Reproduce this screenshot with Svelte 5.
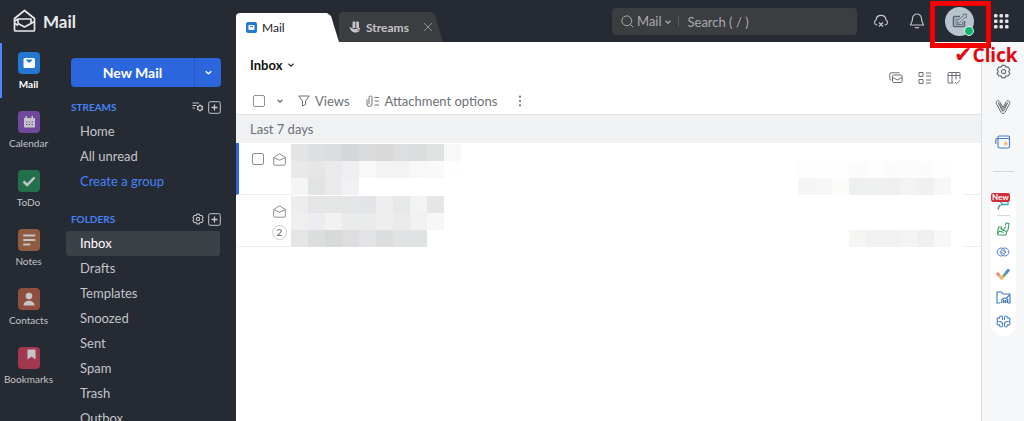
<script lang="ts">
  const apps = [
    { id: "mail", name: "Mail", color: "#2376d2" },
    { id: "calendar", name: "Calendar", color: "#70499d" },
    { id: "todo", name: "ToDo", color: "#22714c" },
    { id: "notes", name: "Notes", color: "#8f5c42" },
    { id: "contacts", name: "Contacts", color: "#8e4f3e" },
    { id: "bookmarks", name: "Bookmarks", color: "#a1384e" },
  ];
  const folders = ["Inbox", "Drafts", "Templates", "Snoozed", "Sent", "Spam", "Trash", "Outbox"];

  // redacted text, one colour per tile
  const messages = [
    {
      unread: true,
      count: 0,
      left: [
        "#e4e4e4 #dce0e3 #dcdddf #d5d6d8 #dadbdc #d9d9d9 #dcdee0 #dbddde #e0e2e1 #f7f9f8",
        "#e9e9e9 #e6e6e6 #eaeaea #eeeff2 #f8f8f8 #f3f3f3 #f2f4f3 #f8f8f8 #f7faf9 #fefefe",
        "#f3f6f5 #e2e3e5 #eaeaea #f0f1f4 #fff #fff #fff #fff #fff #fff",
      ],
      right: [
        "#fff #fff #fff #fff #fff #fff #fff #fff #fff",
        "#fdfdfd #fdfdfd #fefefe #fbfbfb #fdfdfd #fbfbfb #fcfcfc #fbfbfb #fdfdfd",
        "#f5f5f5 #f7f7f7 #fbfbf9 #edf0ef #eef1f0 #efefef #f3f3f3 #f0f0f0 #f5f8f7",
      ],
    },
    {
      unread: false,
      count: 2,
      left: [
        "#ededed #e4e5e7 #e4e6e5 #e4e5e7 #e3e4e7 #eeeeee #e7e8ea #f2f4f3 #e6e6e6 #fff",
        "#efefed #ebedf0 #f2f2f2 #eaebeb #e9eaec #eeeeee #e9ebea #f1f1f1 #f7f7f7 #fff",
        "#e4e6e5 #dcdedd #d7dadb #dedede #e2e3e6 #dcdedd #e0e2e4 #e0e3e4 #fff #fff",
      ],
      right: [
        "#fff #fff #fff #fff #fff #fff #fff #fff #fff",
        "#fff #fff #fff #fff #fff #fff #fff #fff #fff",
        "#fff #fff #fff #f5f5f3 #f0f2f1 #f1f1f1 #f3f3f1 #efefef #f7f7f7",
      ],
    },
  ];

  let activeApp = $state("mail");
  let activeFolder = $state("Inbox");
</script>

{#snippet chevron(size: number)}
  <svg width={size} height={size} viewBox="0 0 8 8" class="line"><path d="M1.5 2.8 4 5.2 6.5 2.8" stroke-width="1.2" /></svg>
{/snippet}

{#snippet gear()}
  <path d="M5.500 3.300 6.300 1.500h3.400l.8 1.800 2.400-.1L14.800 6l-1.300 2 1.300 2-1.900 2.800-2.400-.1-.8 1.800H6.300l-.8-1.800-2.400.1L1.200 10l1.300-2-1.300-2 1.900-2.800z" />
  <circle cx="8" cy="8" r="2.200" />
{/snippet}

{#snippet plus()}
  <svg width="13" height="13" viewBox="0 0 13 13" class="line"><rect x=".7" y=".7" width="11.600" height="11.600" rx="1.500" /><path d="M6.500 3.500v6M3.500 6.500h6" stroke-width="1.300" /></svg>
{/snippet}

{#snippet tiles(rows: string[])}
  <div class="tiles">
    {#each rows as row}
      <div class="tile-row">
        {#each row.split(" ") as color}
          <i style="background: {color}"></i>
        {/each}
      </div>
    {/each}
  </div>
{/snippet}

<div class="app">
  <header>
    <a class="brand" href="#mail">
      <svg width="24" height="24" viewBox="0 0 24 24" class="line" stroke-width="1.700">
        <path d="M1.500 9.500 11.500 1.500l10 8V21a1 1 0 0 1-1 1h-18a1 1 0 0 1-1-1z" />
        <path d="M1.500 14 5 16.500M5 14.500V10h13v4.500L11.500 18 5 14.500M5 10 1.500 12M18 14.500l3.500-2" />
      </svg>
      <span>Mail</span>
    </a>
    <nav class="tabs">
      <button class="tab current">
        <svg width="11" height="11" viewBox="0 0 11 11"><rect width="11" height="11" rx="2" fill="#2279d6" /><rect x="2.500" y="3" width="6" height="5" rx=".8" fill="#fff" /><path d="M4 4h3v1H4z" fill="#2279d6" /></svg>
        Mail
      </button>
      <div class="tab other">
        <svg width="12" height="12" viewBox="0 0 12 12" fill="#c4c5c7"><circle cx="5" cy="1.800" r="1.500" /><circle cx="8.500" cy="1.800" r="1.500" /><path d="M3.500 2.500h2.800V7H3.500zM7.200 2.500H10V7H7.200zM.5 6l5 2.300L11 6.800v1.400L7 9.500l4-.3C10 11 8 11.500 6 11.500S1.500 10 .5 6z" /></svg>
        <span>Streams</span>
        <button class="close" aria-label="Close tab"><svg width="10" height="10" viewBox="0 0 10 10" class="line"><path d="m1 1 8 8M9 1 1 9" /></svg></button>
      </div>
    </nav>
    <div class="search">
      <svg width="13" height="13" viewBox="0 0 13 13" class="line"><circle cx="5.800" cy="5.800" r="4.900" /><path d="m9.300 9.300 3 3" /></svg>
      <button class="scope">Mail {@render chevron(8)}</button>
      <input type="text" placeholder="Search ( / )" aria-label="Search" />
    </div>
    <div class="tools">
      <button aria-label="Offline">
        <svg width="16" height="16" viewBox="0 0 16 16" class="line" stroke-width="1.200"><path d="M4.500 12H4a2.700 2.700 0 0 1-.8-5.200C3.200 1 12.800 1 12.800 6.800A2.700 2.700 0 0 1 12 12h-.5M6 9.500l4 4M10 9.500l-4 4" /></svg>
      </button>
      <button aria-label="Notifications">
        <svg width="16" height="16" viewBox="0 0 16 16" class="line" stroke-width="1.200"><path d="M8 1a4.500 4.500 0 0 0-4.500 4.500C3.500 10 1.500 10.500 1.500 12h13c0-1.500-2-2-2-6.500A4.500 4.500 0 0 0 8 1zM6 14.200c.8 1 3.200 1 4 0" /></svg>
      </button>
      <div class="profile">
        <button class="avatar" aria-label="Profile">
          <svg width="16" height="16" viewBox="0 0 16 16" class="line"><path d="M8 3.500H2.500A1 1 0 0 0 1.500 4.500v8a1 1 0 0 0 1 1h9a1 1 0 0 0 1-1V8" stroke-width="1.600" /><path d="M4 6h3M4 6v5.500h6.500V9M5.500 10.500V8l6-5.500-1-1 4-.5v4l-1-1-6 6z" stroke-width=".8" /></svg>
        </button>
        <span class="status"></span>
        <div class="frame"></div>
        <div class="note"><span>✔</span>Click</div>
      </div>
      <button aria-label="All apps">
        <svg width="15" height="15" viewBox="0 0 15 15" fill="#e3e4e6">
          {#each [0, 5.5, 11] as y}
            {#each [0, 5.5, 11] as x}
              <rect {x} {y} width="3.500" height="3.500" rx="1.200" />
            {/each}
          {/each}
        </svg>
      </button>
    </div>
  </header>

  <div class="body">
    <nav class="rail">
      {#each apps as app}
        <button class="app-item" class:active={activeApp === app.id} onclick={() => (activeApp = app.id)}>
          <svg width="22" height="22" viewBox="0 0 22 22">
            <rect width="22" height="22" rx="4" fill={app.color} />
            {#if app.id === "mail"}
              <rect x="5.500" y="6" width="11.500" height="10" rx="1.500" fill="#fff" />
              <path d="M7.500 7.500h7.500L11.200 11z" fill={app.color} />
            {:else if app.id === "calendar"}
              <path d="M6 7h11v8.500a1 1 0 0 1-1 1H7a1 1 0 0 1-1-1zM7.500 5h1.500v3H7.500zM13.500 5H15v3h-1.500z" fill="#c5c5c8" />
              <path d="M8 11h7M8 13.500h7" stroke={app.color} stroke-width="1.200" stroke-dasharray="1.400" />
            {:else if app.id === "todo"}
              <path d="m5.500 11.500 3.700 3.500L16.500 7.500" fill="none" stroke="#c5c5c8" stroke-width="2.500" />
            {:else if app.id === "notes"}
              <path d="M6 6.500h10.500M6 11h10.500M6 15.500h5.500" stroke="#c5c5c8" stroke-width="2" stroke-linecap="round" />
            {:else if app.id === "contacts"}
              <circle cx="11" cy="8" r="3.300" fill="#c5c5c8" />
              <path d="M5.500 17.500c0-6.500 11-6.500 11 0z" fill="#c5c5c8" />
            {:else}
              <path d="M9.500 2.500H17.500v10l-4-3-4 3z" fill="#c5c5c8" />
            {/if}
          </svg>
          <span>{app.name}</span>
        </button>
      {/each}
    </nav>

    <aside class="sidebar">
      <div class="compose">
        <button class="new-mail">New Mail</button>
        <button class="more" aria-label="More">{@render chevron(9)}</button>
      </div>
      <div class="group">
        <h2>STREAMS</h2>
        <button aria-label="Stream settings">
          <svg width="12" height="12" viewBox="0 0 12 12" class="line" stroke-width="1.200"><path d="M.5 2H7M.5 4.500h4M.5 7h2.500" /><circle cx="8" cy="7" r="2.300" /><path d="M8 3.500v1.200M8 9.300v1.200M5 5.300l1 .6M10 8.100l1 .6M5 8.700l1-.6M10 5.900l1-.6" /></svg>
        </button>
        <button aria-label="Add group">{@render plus()}</button>
      </div>
      <ul>
        <li><a href="#home">Home</a></li>
        <li><a href="#unread">All unread</a></li>
        <li><a class="create" href="#create">Create a group</a></li>
      </ul>
      <div class="group second">
        <h2>FOLDERS</h2>
        <button aria-label="Folder settings"><svg width="12" height="12" viewBox="0 0 16 16" class="line" stroke-width="1.400">{@render gear()}</svg></button>
        <button aria-label="Add folder">{@render plus()}</button>
      </div>
      <ul>
        {#each folders as folder}
          <li><a href="#{folder}" class:active={activeFolder === folder} onclick={() => (activeFolder = folder)}>{folder}</a></li>
        {/each}
      </ul>
    </aside>

    <main>
      <div class="title">
        <h1>Inbox</h1>
        {@render chevron(8)}
      </div>
      <div class="toolbar">
        <input type="checkbox" aria-label="Select all" />
        <button class="pick" aria-label="Selection options">{@render chevron(8)}</button>
        <button class="filter">
          <svg width="12" height="12" viewBox="0 0 12 12" class="line"><path d="M.8 1h10.400L7.500 6v3.500L4.500 11V6z" /></svg>
          Views
        </button>
        <button class="filter">
          <svg width="14" height="13" viewBox="0 0 14 13" class="line"><path d="M1 4.500V9a2.500 2.500 0 0 0 5 0V2.500a1.500 1.500 0 0 0-3 0V9M8.500 2.500H13M8.500 6H13M8.500 10H13" /></svg>
          Attachment options
        </button>
        <button class="kebab" aria-label="More options"><svg width="4" height="12" viewBox="0 0 4 12" fill="#6d7076"><circle cx="2" cy="1.700" r="1.100" /><circle cx="2" cy="6" r="1.100" /><circle cx="2" cy="10.300" r="1.100" /></svg></button>
        <div class="view-tools">
          <button aria-label="Conversation view"><svg width="14" height="14" viewBox="0 0 14 14" class="line"><path d="M2.500 9H2a1.200 1.200 0 0 1-1.200-1.200V3A1.200 1.200 0 0 1 2 1.800h8.500" /><rect x="3.500" y="4" width="9.700" height="7.500" rx="1.200" /><path d="m3.800 6.500 4.500 2.500L13 6.500" /></svg></button>
          <button aria-label="Layout"><svg width="14" height="14" viewBox="0 0 14 14" class="line"><rect x="1" y="1.500" width="4" height="4" /><rect x="1" y="8.500" width="4" height="4" /><path d="M8 2h5M8 5h5M8 9h5M8 12h5" /></svg></button>
          <button aria-label="Columns"><svg width="14" height="14" viewBox="0 0 14 14" class="line"><path d="M6.500 12H2a1 1 0 0 1-1-1V2.500a1 1 0 0 1 1-1h10a1 1 0 0 1 1 1V8M1 4.500h12M5 1.500V12M9 1.500v7M8 11l1.500 1.700L13 9.500" /></svg></button>
        </div>
      </div>
      <div class="day">Last 7 days</div>
      {#each messages as message}
        <article class:selected={message.unread}>
          <div class="marks">
            {#if message.unread}
              <input type="checkbox" aria-label="Select message" />
            {/if}
            <div class="state">
              <svg width="13" height="13" viewBox="0 0 13 13" class="line"><path d="M.7 4.500 6.500.8l5.800 3.700v6.700a1 1 0 0 1-1 1H1.700a1 1 0 0 1-1-1zM.7 4.700l5.800 2.500 5.800-2.500" /></svg>
              {#if message.count}
                <span class="count">{message.count}</span>
              {/if}
            </div>
          </div>
          <div class="summary">
            {@render tiles(message.left)}
            {@render tiles(message.right)}
          </div>
          <div class="end"></div>
        </article>
      {/each}
    </main>

    <aside class="widgets">
      <button aria-label="Settings"><svg width="15" height="15" viewBox="0 0 16 16" class="line" stroke-width="1.200">{@render gear()}</svg></button>
      <button aria-label="Zia"><svg width="16" height="16" viewBox="0 0 16 16" class="line"><path d="M1.300 4.500C.5 2 3.500.5 4.700 2.700L8 8.500l3.300-5.800c1.200-2.200 4.200-.7 3.400 1.800L9.800 13.500c-.8 1.500-2.800 1.500-3.600 0z" /><path d="M3 3.500 7.500 12c.3.600 1 .3.700-.4L4.500 4.500M13 3.500 8.500 12M11.500 4.500 8.500 10" /></svg></button>
      <button aria-label="Wallet"><svg width="16" height="14" viewBox="0 0 16 14" fill="none" stroke="#477cc4" stroke-width="1.100"><path d="M3 3.500V2A1 1 0 0 1 4 1h9.500a1 1 0 0 1 1 1v9.500a1.500 1.500 0 0 1-1.500 1.500H4.500A1.500 1.500 0 0 1 3 11.500V3.500h10a1.500 1.500 0 0 1 1.500 1.500M3 3.500H2A1.200 1.200 0 0 0 .8 4.700V9" /><circle cx="10.800" cy="8.700" r="1.400" fill="#f5ae3e" stroke="#f8cb80" /></svg></button>
      <hr />
      <div class="dock">
        <button class="fresh" aria-label="New widget"><svg width="14" height="14" viewBox="0 0 14 14" fill="none" stroke-width="1.300"><path d="M4.500 5h7.500v3.500H7L4.500 6" stroke="#2fb4b4" /><path d="M2 13.500 3.500 9.500 7 8.500" stroke="#3f8f9d" /></svg><b>New</b></button>
        <hr />
        <button aria-label="Desk"><svg width="14" height="14" viewBox="0 0 14 14" fill="none" stroke="#35a05b" stroke-width="1.100" stroke-linejoin="round"><path d="M9.500 3.500 10 1l3 .5-1 6.500c-.2 1-1 1.500-2 1.200L6.500 8 5 5H2.500L1.500 11c-.2 1.300.5 2 1.500 2h7l.8-3.500M4.500 6.500 7 8l3-3.500M1.800 11.500C2.500 9 4 9 5 9.500l2.500 1" /></svg></button>
        <button aria-label="Links"><svg width="14" height="10" viewBox="0 0 14 10" fill="none" stroke="#5785ca"><path d="M8.500 7.200A4 4 0 1 1 8.500 2.800L9.500 5A1.800 1.800 0 0 1 6.500 6.300L5 4.500" /><path d="M5.500 2.800a4 4 0 1 1 0 4.400L4.500 5a1.800 1.800 0 0 1 3-1.300L9 5.500" /></svg></button>
        <button aria-label="Tasks"><svg width="14" height="12" viewBox="0 0 14 12"><path d="m1 5 3 3.500" stroke="#e98378" stroke-width="2.800" /><path d="m3 7.300 2.500 3L8 7.500" stroke="#efb765" stroke-width="2.800" fill="none" /><path d="M7.300 8.300 10.500 4.500" stroke="#62a98b" stroke-width="2.800" /><path d="m10 5 3-3.500" stroke="#5a87c8" stroke-width="2.800" /></svg></button>
        <button aria-label="Files"><svg width="15" height="13" viewBox="0 0 15 13" fill="none" stroke="#3976bd" stroke-width="1.100"><path d="M4 12H1V1h4.500L7 3h7v9h-2" /><path d="m5 9.500 3-2.500 2 .5L13.500 4" /><path d="M5.500 10.500V12M7.500 9v3M9.500 9v3M11.500 7.500V12" stroke-width="1.500" /></svg></button>
        <button aria-label="Assistant"><svg width="15" height="13" viewBox="0 0 15 13" fill="none" stroke="#4680cc" stroke-width="1.100"><path d="M6.500 5V2.500C6.500.5 3.500.5 3.500 3 1 2.500.2 5 2 6.500.2 8 1 10.500 3.500 10c0 2.500 3 2.500 3 .5V8L4.500 6.500H3M8.500 5V2.500c0-2 3-2 3 .5 2.500-.5 3.300 2 1.500 3.500 1.800 1.500 1 4-1.500 3.500 0 2.500-3 2.500-3 .5V8l2-1.500H12" /></svg></button>
      </div>
    </aside>
  </div>
</div>

<style>
  :global(body) {
    background: #252a33;
    font-family: Lato, "Liberation Sans", sans-serif;
  }
  .app {
    display: flex;
    flex-direction: column;
    height: 100vh;
    overflow: hidden;
    color: #c3c5c9;
    font-size: 13px;
  }
  button {
    display: flex;
    align-items: center;
    justify-content: center;
    padding: 0;
    border: 0;
    background: none;
    color: inherit;
    font: inherit;
  }
  a {
    color: inherit;
    text-decoration: none;
  }
  svg {
    display: block;
    flex: none;
  }
  .line {
    fill: none;
    stroke: currentColor;
    stroke-linejoin: round;
  }
  header {
    display: flex;
    flex: none;
    height: 42px;
  }
  .brand {
    display: flex;
    align-items: center;
    gap: 6px;
    box-sizing: border-box;
    width: 236px;
    padding-left: 13px;
    color: #e8e9eb;
    font-size: 17px;
    font-weight: 700;
  }
  .tabs {
    display: flex;
    align-items: flex-end;
    flex: 1;
    font-size: 12px;
  }
  .tab {
    display: flex;
    align-items: center;
    justify-content: flex-start;
    box-sizing: border-box;
    height: 29px;
    border-radius: 4px 0 0 0;
    padding-left: 10px;
    gap: 5px;
    clip-path: polygon(0 0, calc(100% - 12px) 0, calc(100% - 8px) 3px, 100% 100%, 0 100%);
  }
  .current {
    width: 103px;
    background: #fff;
    color: #222;
  }
  .other {
    width: 104px;
    height: 30px;
    background: #3c3d40;
    font-weight: 700;
  }
  .close {
    margin-left: 9px;
    color: #8c8e92;
  }
  .search {
    display: flex;
    align-items: center;
    box-sizing: border-box;
    width: 245px;
    height: 27px;
    margin-top: 8px;
    padding-left: 9px;
    border-radius: 4px;
    background: #3c3d40;
    color: #a9abaf;
  }
  .scope {
    gap: 2px;
    margin-left: 3px;
    padding-right: 6px;
    border-right: 1px solid #5a5b5f;
    line-height: 11px;
  }
  .search input {
    flex: 1;
    min-width: 0;
    margin-left: 9px;
    padding: 0;
    border: 0;
    background: none;
    color: inherit;
    font: inherit;
  }
  .search input::placeholder {
    color: inherit;
  }
  .tools {
    display: flex;
    align-items: center;
    gap: 20px;
    margin-left: 16px;
    padding-right: 15px;
  }
  .profile {
    position: relative;
  }
  .avatar {
    width: 29px;
    height: 29px;
    border-radius: 50%;
    background: #b8c4cd;
    color: #58646e;
  }
  .status {
    position: absolute;
    right: 0;
    bottom: 0;
    width: 8px;
    height: 8px;
    border: 1px solid #dff3e9;
    border-radius: 50%;
    background: #10b36c;
  }
  .frame {
    position: absolute;
    top: -6px;
    left: -15px;
    width: 51px;
    height: 37px;
    border: 5px solid #f50000;
  }
  .note {
    position: absolute;
    top: 36px;
    left: 9px;
    z-index: 1;
    display: flex;
    align-items: center;
    color: #e0090f;
    font: 700 19px/24px "Noto Sans", sans-serif;
  }
  .note span {
    font-family: "DejaVu Sans", sans-serif;
    font-size: 22px;
  }
  .body {
    display: flex;
    flex: 1;
    min-height: 0;
  }
  .rail {
    width: 57px;
    flex: none;
  }
  .app-item {
    flex-direction: column;
    box-sizing: border-box;
    width: 57px;
    height: 55px;
    margin: 1px 0 4px;
    gap: 4px;
    border-left: 2px solid transparent;
    padding-right: 2px;
    font-size: 10px;
    line-height: 12px;
  }
  .app-item + .app-item {
    margin-top: 0;
  }
  .app-item.active {
    border-color: #4f86ff;
    color: #fff;
    font-weight: 700;
  }
  .sidebar {
    width: 179px;
    flex: none;
  }
  .compose {
    display: flex;
    height: 29px;
    margin: 16px 15px 0 14px;
    border-radius: 4px;
    background: #2b66dd;
    color: #fff;
  }
  .new-mail {
    flex: 1;
    font-size: 14px;
    font-weight: 700;
  }
  .more {
    width: 27px;
    border-left: 1px solid #2457be;
  }
  .group {
    display: flex;
    align-items: center;
    height: 20px;
    margin: 10px 15px 2px 14px;
    gap: 4px;
  }
  .second {
    margin-top: 15px;
  }
  h2 {
    flex: 1;
    margin: 0;
    color: #4683f7;
    font-size: 10px;
    font-weight: 700;
  }
  ul {
    margin: 0 16px 0 9px;
    padding: 0;
    list-style: none;
  }
  li a {
    display: block;
    padding-left: 14px;
    border-radius: 3px;
    line-height: 25px;
  }
  li a.active {
    background: #3c4047;
    color: #fff;
  }
  li a.create {
    color: #4683f7;
  }
  main {
    flex: 1;
    min-width: 0;
    background: #fff;
    color: #6d7076;
  }
  .title {
    display: flex;
    align-items: center;
    gap: 5px;
    height: 46px;
    padding-left: 14px;
    color: #333;
  }
  h1 {
    margin: 0;
    color: #111;
    font-size: 13px;
    font-weight: 700;
  }
  .toolbar {
    display: flex;
    align-items: center;
    height: 26px;
    padding-left: 17px;
  }
  input[type="checkbox"] {
    appearance: none;
    box-sizing: border-box;
    width: 12px;
    height: 12px;
    margin: 0;
    border: 1px solid #8c8e92;
    border-radius: 2px;
  }
  .pick {
    margin: 0 14px 0 11px;
  }
  .filter {
    gap: 5px;
    margin-right: 16px;
  }
  .kebab {
    margin-left: 5px;
  }
  .view-tools {
    display: flex;
    gap: 15px;
    margin: 0 20px 46px auto;
  }
  .day {
    padding: 1px 14px 0;
    border-top: 1px solid #dfe1e4;
    background: #f0f1f3;
    line-height: 27px;
  }
  article {
    display: flex;
    height: 52px;
  }
  .marks {
    display: flex;
    align-items: flex-start;
    justify-content: flex-end;
    box-sizing: border-box;
    width: 55px;
    padding: 10px 4px 0 0;
    gap: 8px;
    border-bottom: 1px solid #eee;
    border-left: 1px solid #fff;
  }
  .selected .marks {
    border-left: 3px solid #2b66dd;
  }
  .state {
    display: flex;
    flex-direction: column;
    align-items: center;
    width: 15px;
    gap: 7px;
    color: #8c8e92;
  }
  .count {
    box-sizing: border-box;
    width: 15px;
    height: 15px;
    border: 1px solid #ccd0d4;
    border-radius: 50%;
    color: #5b6068;
    font-size: 10px;
    line-height: 13px;
    text-align: center;
  }
  .summary {
    display: flex;
    justify-content: space-between;
    flex: 1;
    padding: 1px 13px 0 0;
  }
  .tile-row {
    display: flex;
  }
  .tile-row i {
    width: 17px;
    height: 17px;
  }
  .end {
    width: 17px;
    border-bottom: 1px solid #eee;
  }
  .widgets {
    display: flex;
    flex-direction: column;
    align-items: center;
    box-sizing: border-box;
    width: 43px;
    flex: none;
    padding-top: 22px;
    gap: 20px;
    border-left: 1px solid #dcdee2;
    background: #f6f7f9;
    color: #66696f;
  }
  hr {
    width: 21px;
    margin: 2px 0 0;
    border: 0;
    border-top: 1px solid #d5d7dc;
  }
  .dock {
    display: flex;
    flex-direction: column;
    align-items: center;
    width: 25px;
    padding: 4px 0 8px;
    gap: 11px;
    border-radius: 12px;
    background: #fff;
  }
  .dock hr {
    width: 13px;
    margin: -6px 0 -5px;
  }
  .fresh {
    position: relative;
  }
  .fresh b {
    position: absolute;
    top: -3px;
    left: -5px;
    padding: 0 1px;
    border-radius: 2px;
    background: #d0303b;
    color: #fff;
    font-size: 8px;
    line-height: 9px;
  }
</style>
